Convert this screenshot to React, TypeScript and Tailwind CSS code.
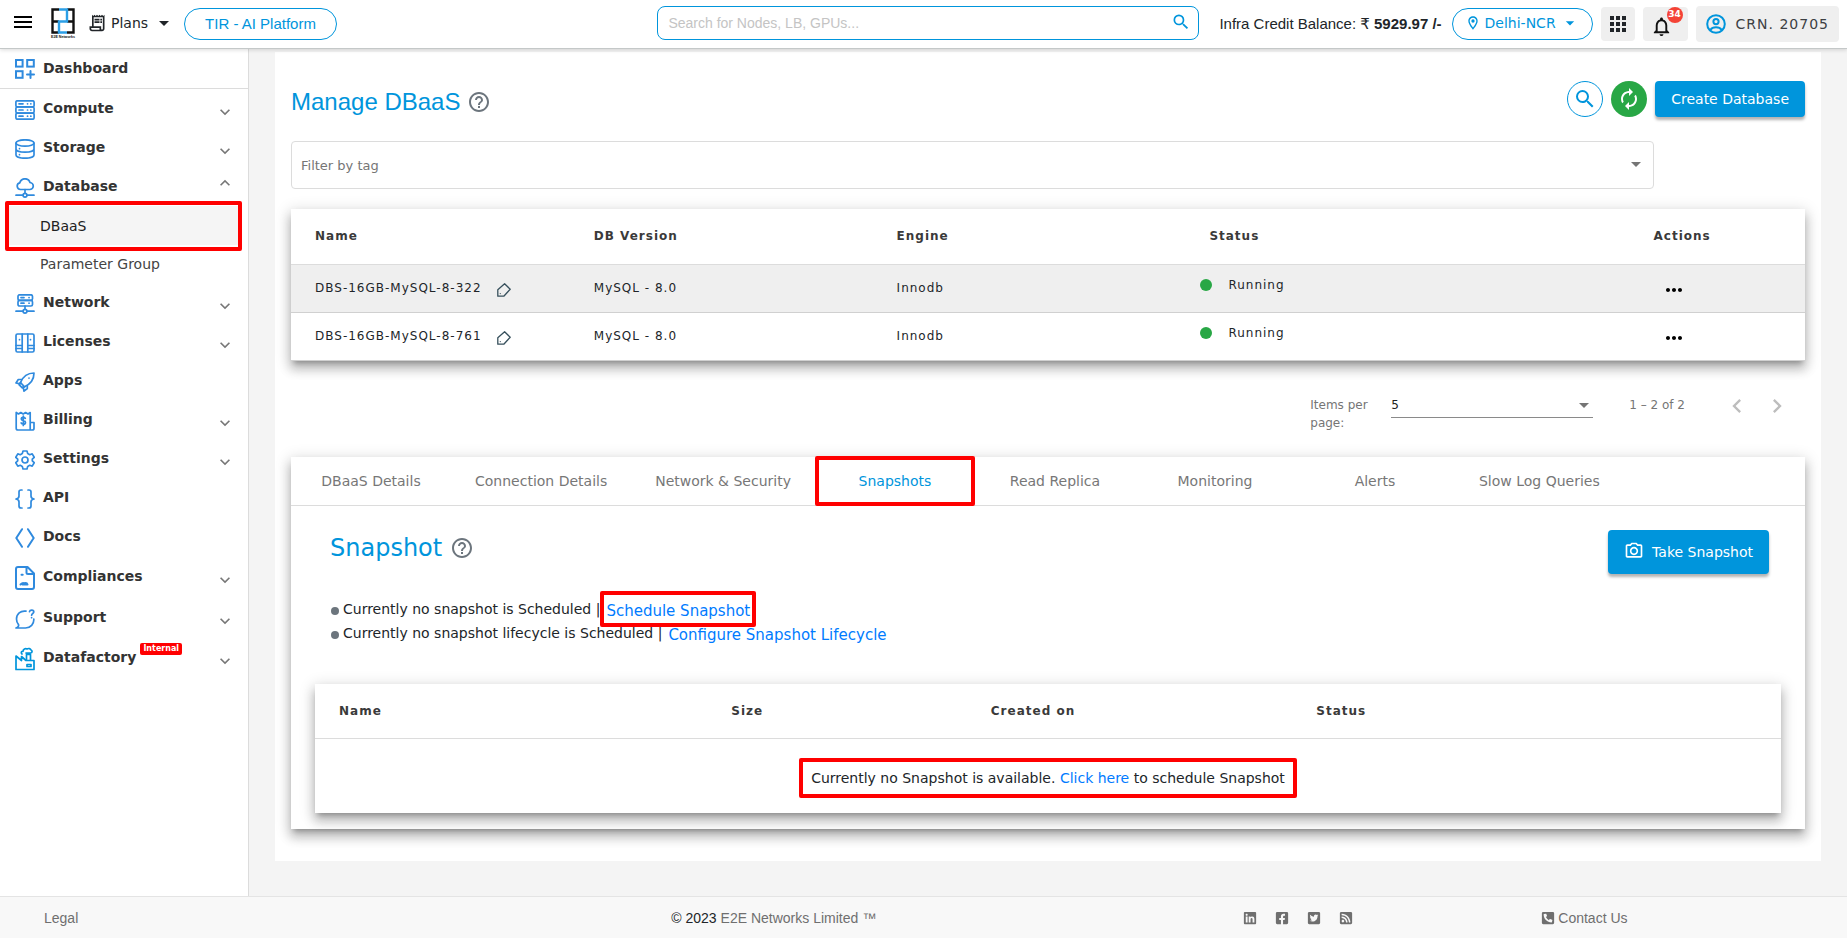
import React from "react";
import {
  MdMenu,
  MdOutlineReceiptLong,
  MdArrowDropDown,
  MdSearch,
  MdOutlineLocationOn,
  MdApps,
  MdNotificationsNone,
  MdHelpOutline,
  MdAutorenew,
  MdMoreHoriz,
  MdChevronLeft,
  MdChevronRight,
  MdOutlineCameraAlt,
  MdKeyboardArrowDown,
  MdKeyboardArrowUp,
} from "react-icons/md";
import {
  FaLinkedin,
  FaFacebookSquare,
  FaTwitterSquare,
  FaRssSquare,
  FaPhoneSquareAlt,
} from "react-icons/fa";

const CARD_SHADOW =
  "shadow-[0_5px_5px_-3px_rgba(0,0,0,0.25),0_8px_10px_1px_rgba(0,0,0,0.18),0_3px_14px_2px_rgba(0,0,0,0.14)]";

// Red frame drawn around an element
const Highlight: React.FC<{ className: string }> = ({ className }) => (
  <span
    aria-hidden="true"
    className={`pointer-events-none absolute z-10 rounded-[2px] border-4 border-[#ff0000] ${className}`}
  />
);

const Icon: React.FC<{ children: React.ReactNode; tall?: boolean }> = ({ children, tall }) => (
  <svg
    className={tall ? "h-6 w-5" : "h-5 w-5"}
    viewBox={tall ? "0 0 20 24" : "0 0 20 20"}
    fill="none"
    stroke="#2f8ade"
    strokeWidth="1.7"
    strokeLinecap="round"
    strokeLinejoin="round"
    aria-hidden="true"
  >
    {children}
  </svg>
);

const icons = {
  dashboard: (
    <Icon>
      <g strokeWidth="2" strokeLinejoin="miter">
        <rect x="1" y="1" width="6.6" height="6.6" />
        <rect x="12.2" y="1" width="6.6" height="6.6" />
        <rect x="1" y="12.2" width="6.6" height="6.6" />
        <path d="M15.5 12v7M12 15.5h7" />
      </g>
    </Icon>
  ),
  compute: (
    <Icon>
      <rect x="0.9" y="0.8" width="18.2" height="6" rx="1.4" />
      <rect x="0.9" y="7" width="18.2" height="6" rx="1.4" />
      <rect x="0.9" y="13.2" width="18.2" height="6" rx="1.4" />
      <path d="M4 3.8h4M4 10h4M4 16.2h4M12.5 3.8h.1M15.8 3.8h.1M12.5 10h.1M15.8 10h.1M12.5 16.2h.1M15.8 16.2h.1" />
    </Icon>
  ),
  storage: (
    <Icon>
      <ellipse cx="10" cy="4" rx="9" ry="3.2" />
      <path d="M1 4v12c0 1.800 4 3.200 9 3.200s9-1.400 9-3.200V4M1 10c0 1.800 4 3.200 9 3.200s9-1.400 9-3.200M4.500 9.500v.2M4.500 15.500v.2" />
    </Icon>
  ),
  database: (
    <Icon>
      <path d="M5.500 11.500a3.400 3.400 0 0 1-.7-6.700A5.300 5.300 0 0 1 15 4.500a3.500 3.500 0 0 1-.5 7z" />
      <circle cx="10" cy="17.200" r="1.900" />
      <path d="M10 11.500v3.800M1 17.200h7M12 17.200h7" />
    </Icon>
  ),
  network: (
    <Icon>
      <rect x="3" y="0.8" width="14.500" height="5.600" rx="1.600" />
      <rect x="3" y="6.400" width="14.500" height="5.600" rx="1.600" />
      <path d="M6 3.600h3M6 9.200h3M14 3.600h.1M14 9.200h.1M10 12v3.300M1 17.200h7M12 17.200h7" />
      <circle cx="10" cy="17.200" r="1.900" />
    </Icon>
  ),
  licenses: (
    <Icon>
      <rect x="1" y="1" width="18" height="18" rx="1.500" />
      <path d="M7.200 1v18M12.800 1v18M1 12.500h6M13 12.500h6M1 15.500h6M13 15.500h6M4.500 6.500v.2M15.500 6.500v.2" />
    </Icon>
  ),
  apps: (
    <Icon>
      <path d="M5.500 10.500C8 4.500 12.500 1 19 1c0 6.500-3.500 11-9.500 13.800z" />
      <path d="M6.500 7.500H3.300L1 11l4.200.8M12.300 13.500v3L9 19.200l-.9-4.300M5.500 10.500 4 12.600l3.300 3.300 2.200-1.100M14 6v.1" />
    </Icon>
  ),
  billing: (
    <Icon>
      <path d="M1.200 1.500v15.700c0 1 .8 1.800 1.800 1.800h14.200c1 0 1.800-.8 1.800-1.800v-5.700h-3.800V1.500L13 3l-2.400-1.500L8.200 3 5.800 1.500 3.500 3zM15.200 11.500v7" />
      <path d="M10.300 7.300c-.4-.7-1.100-1-2-1-1.200 0-2 .6-2 1.600 0 2.300 4.200 1.200 4.200 3.500 0 1-.9 1.700-2.200 1.700-1 0-1.800-.4-2.200-1.200M8.300 5.200v9.200" />
    </Icon>
  ),
  settings: (
    <Icon>
      <path d="M8 1h4l.7 2.600 2 1.100 2.500-.8 2 3.400-1.900 1.900v1.600l1.900 1.900-2 3.400-2.500-.8-2 1.100L12 19H8l-.7-2.600-2-1.100-2.500.8-2-3.400 1.900-1.900V9.200L.8 7.300l2-3.400 2.500.8 2-1.100z" />
      <circle cx="10" cy="10" r="3" />
    </Icon>
  ),
  api: (
    <Icon>
      <path d="M7 1H6C4.500 1 4 1.800 4 3v4c0 2-1 2.700-3 3 2 .3 3 1 3 3v4c0 1.200.5 2 2 2h1M13 1h1c1.500 0 2 .8 2 2v4c0 2 1 2.700 3 3-2 .3-3 1-3 3v4c0 1.200-.5 2-2 2h-1" />
    </Icon>
  ),
  docs: (
    <Icon>
      <path strokeWidth="2" d="M7 1.200 1.300 10 7 18.800M13 1.200 18.700 10 13 18.800" />
    </Icon>
  ),
  compliances: (
    <Icon tall>
      <path strokeWidth="2" d="M12.500 1H3C1.900 1 1 1.900 1 3v18c0 1.100.9 2 2 2h14c1.100 0 2-.9 2-2V7.500zM11.500 1.500v5c0 1 .6 1.500 1.500 1.500h5.500M6.500 8.700h1.200" />
      <path strokeWidth="2" d="M5.500 18.500c1.500-1.500 2.500-2.200 3.500-1.200M7.500 18.500h5c-.5-1.500-2-1.500-3-1.200" />
    </Icon>
  ),
  support: (
    <Icon>
      <path d="M11 2.200C5.500 1.300 1.500 5 1.500 10c0 2.300.8 4.200 2 5.600.5 1.400-.5 2.700-2.500 3.400h9.500c5 0 8.700-4 8.300-9" />
      <path d="M14.500 2.600C15 .6 18.800.6 18.800 3c0 1.500-2.200 1.500-2.200 3.200M16.600 8.600v.1" />
    </Icon>
  ),
  datafactory: (
    <Icon tall>
      <g stroke="#0095dc">
        <path d="M1 22.500V9l5.500 4.500V9.500l4.500 4h8v9z" />
        <path d="M11.500 13V7.500h4V13M7 7c-1.500-1-.5-3 1-2.700C8 2 10.500 1 12 2c1.500-1 3.500-.3 4 1 1.500.5 1.500 3-.5 3H11M12 17.500h4v2h-4z" />
      </g>
    </Icon>
  ),
};

interface MenuItem {
  label: string;
  icon: React.ReactNode;
  height: string;
  chevron?: "up" | "down";
  badge?: string;
  children?: string[];
}

const menu: MenuItem[] = [
  { label: "Compute", icon: icons.compute, height: "h-[39px]", chevron: "down" },
  { label: "Storage", icon: icons.storage, height: "h-[39px]", chevron: "down" },
  {
    label: "Database",
    icon: icons.database,
    height: "h-[39px]",
    chevron: "up",
    children: ["DBaaS", "Parameter Group"],
  },
  { label: "Network", icon: icons.network, height: "h-[39px]", chevron: "down" },
  { label: "Licenses", icon: icons.licenses, height: "h-[39px]", chevron: "down" },
  { label: "Apps", icon: icons.apps, height: "h-[39px]" },
  { label: "Billing", icon: icons.billing, height: "h-[39px]", chevron: "down" },
  { label: "Settings", icon: icons.settings, height: "h-[39px]", chevron: "down" },
  { label: "API", icon: icons.api, height: "h-[39px]" },
  { label: "Docs", icon: icons.docs, height: "h-[39px]" },
  { label: "Compliances", icon: icons.compliances, height: "h-[41px]", chevron: "down" },
  { label: "Support", icon: icons.support, height: "h-[41px]", chevron: "down" },
  {
    label: "Datafactory",
    icon: icons.datafactory,
    height: "h-[39px]",
    chevron: "down",
    badge: "Internal",
  },
];

const databases = [
  { name: "DBS-16GB-MySQL-8-322", version: "MySQL - 8.0", engine: "Innodb", status: "Running" },
  { name: "DBS-16GB-MySQL-8-761", version: "MySQL - 8.0", engine: "Innodb", status: "Running" },
];

const tabs = [
  "DBaaS Details",
  "Connection Details",
  "Network & Security",
  "Snapshots",
  "Read Replica",
  "Monitoring",
  "Alerts",
  "Slow Log Queries",
];

const socials = [
  { label: "LinkedIn", icon: <FaLinkedin /> },
  { label: "Facebook", icon: <FaFacebookSquare /> },
  { label: "Twitter", icon: <FaTwitterSquare /> },
  { label: "RSS", icon: <FaRssSquare /> },
];

const Logo = () => (
  <svg className="h-8 w-7 overflow-visible" viewBox="0 0 28 32" role="img" aria-label="E2E Networks">
    <g fill="none" strokeWidth="2.400">
      <path stroke="#111" d="M8 1.500H1.500v23H8M1.500 13.500H8M16 1.500h6.500v23H16M22.500 13.500H16" />
      <path stroke="#2b9fe6" d="M8 1.500h8v12H8v11h8" />
    </g>
    <text x="0" y="30" fontSize="3.600" fontWeight="bold" fill="#111" fontFamily="Liberation Sans, sans-serif">
      E2E Networks
    </text>
  </svg>
);

const TagIcon = () => (
  <svg className="h-[14px] w-[14px]" viewBox="0 0 14 14" fill="none" stroke="#37505c" strokeWidth="1.300" aria-hidden="true">
    <path strokeLinejoin="round" d="M.8 6.800 7.600.8l5.600 5.400-6.400 7H.8z" />
    <circle cx="3.300" cy="10.600" r=".6" fill="#37505c" stroke="none" />
  </svg>
);

const Header = () => (
  <header className="relative z-20 flex h-[49px] items-center border-b border-[#c4c8c8] bg-white pr-2 pb-2 pl-[11px] shadow-[0_1px_4px_rgba(0,0,0,0.15)]">
    <button aria-label="Toggle menu" className="mt-1 text-black">
      <MdMenu size={24} />
    </button>
    <a href="#home" className="mt-2 ml-4">
      <Logo />
    </a>
    <button className="mt-1.5 ml-2 flex items-center text-sm text-[#212529]">
      <MdOutlineReceiptLong size={20} className="mr-1" />
      Plans
      <MdArrowDropDown size={24} className="ml-1" />
    </button>
    <a
      href="#tir"
      className="mt-2 ml-2 flex h-8 items-center rounded-full border border-[#0095dc] px-5 font-['Liberation_Sans',sans-serif] text-[15px] text-[#0095dc]"
    >
      TIR - AI Platform
    </a>

    <div className="relative mt-1.5 mr-5 ml-auto w-[542px]">
      <input
        type="search"
        aria-label="Search"
        placeholder="Search for Nodes, LB, GPUs..."
        className="h-[34px] w-full rounded-lg border border-[#0095dc] pr-9 pl-2.5 font-['Liberation_Sans',sans-serif] text-sm placeholder:text-[#c4c4c4]"
      />
      <button aria-label="Submit search" className="absolute top-1.5 right-2 text-[#0095dc]">
        <MdSearch size={20} />
      </button>
    </div>

    <p className="mt-2 mr-2.5 font-['Liberation_Sans','DejaVu_Sans',sans-serif] text-[15px] whitespace-nowrap text-[#212529]">
      Infra Credit Balance: ₹ <b>5929.97 /-</b>
    </p>
    <button className="mt-2 flex h-8 w-[141px] items-center justify-center rounded-full border border-[#0095dc] pb-0.5 text-sm text-[#0095dc]">
      <MdOutlineLocationOn size={16} className="mr-1" />
      Delhi-NCR
      <MdArrowDropDown size={20} className="ml-1" />
    </button>
    <button aria-label="Services" className="mt-2 ml-2 flex h-[34px] w-[34px] items-center justify-center rounded bg-[#efefef] text-[#212529]">
      <MdApps size={24} />
    </button>
    <button aria-label="Notifications" className="relative mt-2 ml-2 flex h-[34px] w-[45px] items-center rounded bg-[#efefef] pt-1 pl-[7px] text-[#111]">
      <MdNotificationsNone size={23} />
      <span className="absolute top-0 right-[5px] flex h-4 w-4 items-center justify-center rounded-full bg-[#f44336] text-[9px] font-bold text-white">
        34
      </span>
    </button>
    <button className="mt-2 ml-2 flex h-9 items-center rounded bg-[#efefef] pr-2.5 pl-2.5 text-sm tracking-[1px] text-[#3c4043]">
      <svg className="mr-2.5 h-5 w-5" viewBox="0 0 20 20" fill="none" stroke="#0095dc" strokeWidth="2" aria-hidden="true">
        <circle cx="10" cy="10" r="8.800" />
        <circle cx="10" cy="7.600" r="2.600" />
        <path d="M4.300 16c1.300-2 3.300-2.700 5.700-2.700s4.400.7 5.700 2.700" />
      </svg>
      CRN. 20705
    </button>
  </header>
);

const Sidebar = () => (
  <aside className="w-[249px] shrink-0 border-r border-[#dcdcdc] bg-white">
    <nav className="text-sm font-bold text-[#333]">
      <a href="#dashboard" className="flex h-10 items-center border-b border-[#dcdcdc] pb-0.5 pl-[15px]">
        <span className="mt-0.5 mr-2">{icons.dashboard}</span>
        Dashboard
      </a>
      {menu.map((item) => (
        <React.Fragment key={item.label}>
          <button className={`flex w-full items-center pr-[13px] pb-0.5 pl-[15px] ${item.height}`}>
            <span className="mt-1 mr-2">{item.icon}</span>
            {item.label}
            {item.badge && (
              <span className="mb-4 ml-1 rounded-[2px] bg-[#ff0000] px-[3px] text-[8px] leading-3 text-white">
                {item.badge}
              </span>
            )}
            {item.chevron === "down" && (
              <MdKeyboardArrowDown size={20} className="mt-2 ml-auto text-[#777]" />
            )}
            {item.chevron === "up" && (
              <MdKeyboardArrowUp size={20} className="mb-1.5 ml-auto text-[#777]" />
            )}
          </button>
          {item.children?.map((child) =>
            child === "DBaaS" ? (
              <a
                key={child}
                href="#dbaas"
                className="relative mr-1.5 ml-[5px] flex h-[39px] items-center bg-[#f5f5f5] pl-[35px] font-normal text-[#212121]"
              >
                {child}
                <Highlight className="inset-x-0 -top-[5px] -bottom-1.5" />
              </a>
            ) : (
              <a key={child} href="#parameter-group" className="flex h-[38px] items-center pl-10 font-normal text-[#444]">
                {child}
              </a>
            )
          )}
        </React.Fragment>
      ))}
    </nav>
  </aside>
);

const DatabaseTable = () => (
  <table className={`mt-5 w-full table-fixed bg-white text-left text-xs tracking-[1px] text-[#212529] ${CARD_SHADOW}`}>
    <colgroup>
      <col className="w-[20%]" />
      <col className="w-[20%]" />
      <col className="w-[20%]" />
      <col className="w-[30%]" />
      <col className="w-[10%]" />
    </colgroup>
    <thead>
      <tr className="h-[55px] border-b border-[#dcdcdc] text-[#3a3a3a]">
        <th className="pl-6">Name</th>
        <th>DB Version</th>
        <th>Engine</th>
        <th className="pl-2.5">Status</th>
        <th>Actions</th>
      </tr>
    </thead>
    <tbody>
      {databases.map((db, index) => (
        <tr key={db.name} className={`h-12 border-b border-[#d0d0d0] ${index === 0 ? "bg-[#efefef]" : "bg-white"}`}>
          <td className="pl-6">
            <span className="flex items-center">
              {db.name}
              <button aria-label={`Edit tags of ${db.name}`} className="mt-1 ml-[15px]">
                <TagIcon />
              </button>
            </span>
          </td>
          <td>{db.version}</td>
          <td>{db.engine}</td>
          <td>
            <span className="mb-1.5 flex items-center gap-4 pl-px">
              <span className="h-3 w-3 rounded-full bg-[#28a745]" />
              {db.status}
            </span>
          </td>
          <td>
            <button aria-label={`Actions for ${db.name}`} className="mt-1 ml-2 block text-black">
              <MdMoreHoriz size={24} />
            </button>
          </td>
        </tr>
      ))}
    </tbody>
  </table>
);

const Paginator = () => (
  <div className="flex h-24 items-start justify-end pt-[35px] pr-2 text-xs leading-[18px] text-[#757575]">
    <label htmlFor="page-size" className="w-[81px] pr-5">
      Items per page:
    </label>
    <div className="relative w-[202px]">
      <select id="page-size" className="block h-[22px] w-full appearance-none border-b border-[#8a8a8a] pb-1 text-[#212121]">
        <option>5</option>
      </select>
      <MdArrowDropDown size={24} className="pointer-events-none absolute -top-[3px] -right-[3px]" />
    </div>
    <span className="mr-8 ml-9">1 – 2 of 2</span>
    <button aria-label="Previous page" disabled className="flex h-5 w-10 items-center justify-center text-[#bdbdbd]">
      <MdChevronLeft size={28} />
    </button>
    <button aria-label="Next page" disabled className="flex h-5 w-10 items-center justify-center text-[#bdbdbd]">
      <MdChevronRight size={28} />
    </button>
  </div>
);

const SnapshotPanel = () => (
  <section className={`bg-white pb-4 text-sm ${CARD_SHADOW}`}>
    <div role="tablist" className="flex h-[49px] border-b border-[#dcdcdc]">
      {tabs.map((tab) => (
        <button
          key={tab}
          role="tab"
          aria-selected={tab === "Snapshots"}
          className={`relative min-w-[160px] px-6 whitespace-nowrap ${
            tab === "Snapshots" ? "text-[#0095dc]" : "text-[#777]"
          }`}
        >
          {tab}
          {tab === "Snapshots" && <Highlight className="inset-x-0 -top-px -bottom-px" />}
        </button>
      ))}
    </div>

    <div className="flex items-start justify-between pt-6 pr-9 pl-[39px]">
      <h2 className="flex items-center text-2xl leading-9 text-[#0095dc]">
        Snapshot
        <MdHelpOutline size={24} className="ml-2 text-[#6c757d]" />
      </h2>
      <button className="flex h-11 items-center rounded bg-[#0095dc] px-4 text-white shadow-[0_3px_3px_rgba(0,0,0,0.3)]">
        <MdOutlineCameraAlt size={20} className="mr-2 mb-0.5" />
        Take Snapshot
      </button>
    </div>

    <ul className="mt-[23px] pl-10 leading-6 text-[#212529]">
      <li className="flex items-center">
        <span className="mt-1 mr-1 h-2 w-2 rounded-full bg-[#6c757d]" />
        Currently no snapshot is Scheduled |
        <span className="relative ml-1.5 flex h-6 items-center pt-1">
          <a href="#schedule" className="text-[15px] text-[#007bff]">
            Schedule Snapshot
          </a>
          <Highlight className="-inset-x-1.5 -inset-y-1.5" />
        </span>
      </li>
      <li className="flex items-center">
        <span className="mt-1 mr-1 h-2 w-2 rounded-full bg-[#6c757d]" />
        Currently no snapshot lifecycle is Scheduled |
        <span className="ml-1.5 flex h-6 items-center pt-1">
          <a href="#lifecycle" className="text-[15px] text-[#007bff]">
            Configure Snapshot Lifecycle
          </a>
        </span>
      </li>
    </ul>

    <div className="mt-[39px] px-6">
      <table className={`w-full table-fixed bg-white text-left ${CARD_SHADOW}`}>
        <colgroup>
          <col className="w-[28.4%]" />
          <col className="w-[17.7%]" />
          <col className="w-[22.2%]" />
          <col />
        </colgroup>
        <thead>
          <tr className="h-[55px] border-b border-[#dcdcdc] text-xs tracking-[1px] text-[#3a3a3a]">
            <th className="pl-6">Name</th>
            <th>Size</th>
            <th>Created on</th>
            <th>Status</th>
          </tr>
        </thead>
        <tbody>
          <tr className="h-[74px]">
            <td colSpan={4} className="pt-1 text-center text-[#212529]">
              <span className="relative inline-block">
                Currently no Snapshot is available.{" "}
                <a href="#schedule" className="text-[#007bff]">
                  Click here
                </a>{" "}
                to schedule Snapshot
                <Highlight className="-inset-x-3 -inset-y-2.5" />
              </span>
            </td>
          </tr>
        </tbody>
      </table>
    </div>
  </section>
);

const Footer = () => (
  <footer className="flex h-[42px] items-center border-t border-[#e4e4e4] bg-[#f8f8f8] font-['Liberation_Sans',sans-serif] text-sm text-[#6f6f6f]">
    <div className="w-[25%] pl-11">
      <a href="#legal">Legal</a>
    </div>
    <p className="w-[34%] pr-1 text-center">
      <span className="text-[#212529]">© 2023</span> E2E Networks Limited ™
    </p>
    <div className="flex w-[22.5%] justify-center gap-[18px]">
      {socials.map((social) => (
        <a key={social.label} href="#social" aria-label={social.label}>
          {social.icon}
        </a>
      ))}
    </div>
    <a href="#contact" className="ml-9 flex items-center gap-[3px]">
      <FaPhoneSquareAlt />
      Contact Us
    </a>
  </footer>
);

const App = () => {
  return (
    <div className="flex min-h-screen flex-col bg-[#f4f4f4] font-['DejaVu_Sans',sans-serif]">
      <Header />
      <div className="flex flex-1">
        <Sidebar />
        <main className="min-w-0 flex-1 px-[26px] pt-[3px] pb-[34px]">
          <div className="bg-white px-4 pt-[29px] pb-8">
            {/* Page title and actions */}
            <div className="flex h-9 items-center">
              <h1 className="flex items-center pt-1.5 font-['Liberation_Sans',sans-serif] text-2xl text-[#0095dc]">
                Manage DBaaS
                <MdHelpOutline size={24} className="ml-[7px] text-[#6c757d]" />
              </h1>
              <button aria-label="Search" className="ml-auto flex h-9 w-9 items-center justify-center rounded-full border border-[#0095dc] text-[#0095dc]">
                <MdSearch size={24} />
              </button>
              <button aria-label="Refresh" className="mx-2 flex h-9 w-9 items-center justify-center rounded-full bg-[#28a745] text-white">
                <MdAutorenew size={24} />
              </button>
              <button className="h-9 rounded bg-[#0095dc] px-4 text-sm text-white shadow-[0_3px_3px_rgba(0,0,0,0.3)]">
                Create Database
              </button>
            </div>

            <div className="relative mt-6 w-[90%]">
              <select
                aria-label="Filter by tag"
                className="block h-12 w-full appearance-none rounded border border-[#dcdcdc] pt-0.5 pl-[9px] text-[13px] text-[#757575]"
              >
                <option>Filter by tag</option>
              </select>
              <MdArrowDropDown size={24} className="pointer-events-none absolute top-[11px] right-1.5 text-[#757575]" />
            </div>

            <DatabaseTable />
            <Paginator />
            <SnapshotPanel />
          </div>
        </main>
      </div>
      <Footer />
    </div>
  );
};

export default App;
